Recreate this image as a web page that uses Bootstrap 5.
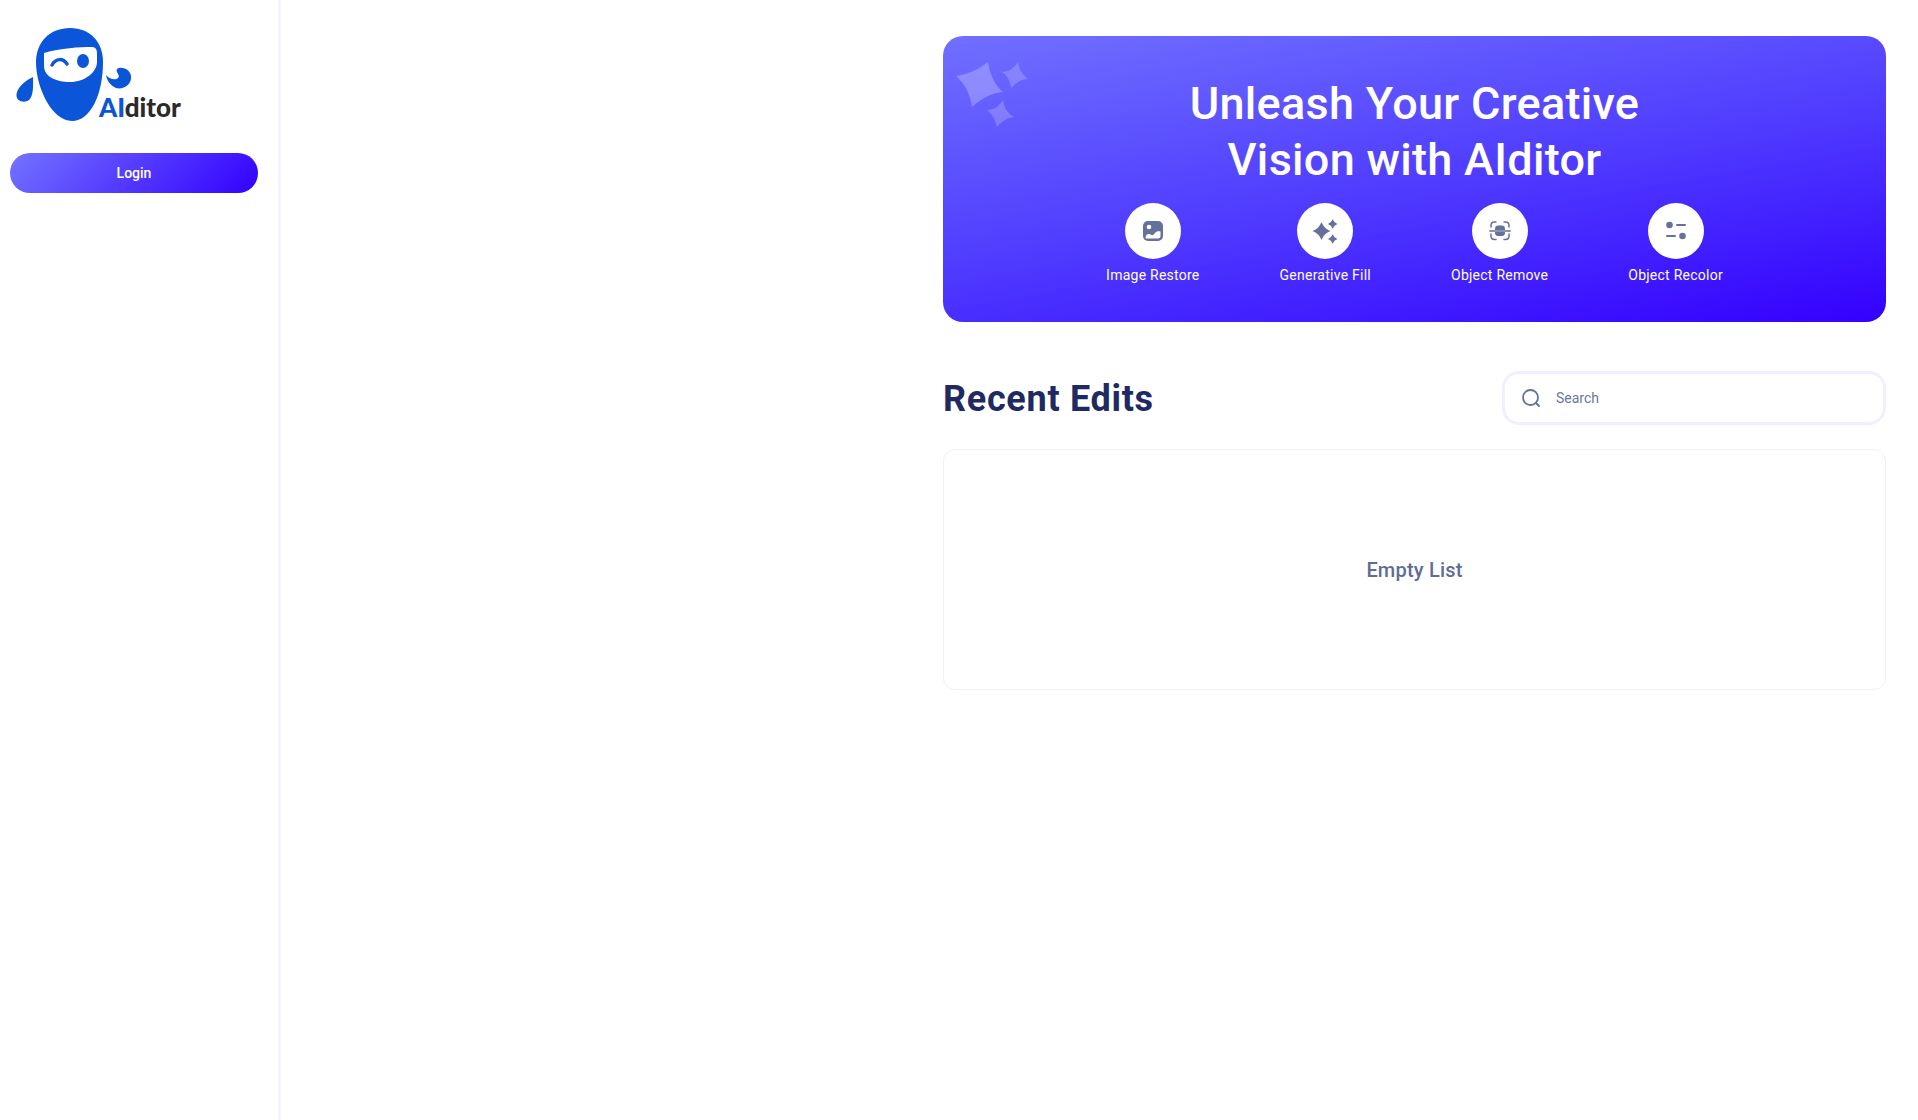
<!DOCTYPE html>
<html lang="en">
<head>
    <meta charset="UTF-8">
    <meta name="viewport" content="width=device-width, initial-scale=1.0">
    <title>AIditor</title>
    <link href="https://cdn.jsdelivr.net/npm/bootstrap@5.3.0/dist/css/bootstrap.min.css" rel="stylesheet">
    <style>
        body { font-family: "Roboto", "Liberation Sans", sans-serif; background: #fff; }
        .app-shell { min-height: 1120px; }
        .side-bar { width: 281px; border-right: 3px solid #f4f3ff; padding: 0 20px 0 10px; flex-shrink: 0; }
        .logo-wrap { height: 153px; }
        .logo-text { font-family: "Lato", sans-serif; font-weight: 900; font-size: 26px; }
        .login-btn { height: 40px; background: linear-gradient(135deg, #7373ff 0%, #3300ff 100%); border: 0; color: #fff; font-size: 14px; font-weight: 500; }
        .login-btn:hover { color: #fff; }
        .main-area { padding: 36px 32px 0 0; }
        .panel-col { width: 943px; }
        .hero-box { height: 286px; border-radius: 20px; padding-top: 40px; background: linear-gradient(170deg, #7070ff 0%, #4d38ff 55%, #3300ff 100%); }
        .hero-sparkle { position: absolute; left: 12px; top: 24px; }
        .hero-title { font-size: 45px; line-height: 56px; font-weight: 500; letter-spacing: .3px; margin-bottom: 0; }
        .hero-actions { gap: 80px; margin-top: 15px; }
        .hero-item { color: #fff; font-size: 14px; font-weight: 400; letter-spacing: .25px; }
        .hero-icon { width: 56px; height: 56px; background: #fff; }
        .hero-label { margin-top: 7px; line-height: 18px; white-space: nowrap; }
        .recent-row { margin-top: 49px; }
        .recent-title { font-size: 36px; font-weight: 700; color: #1f2a63; margin: 0; padding-top: 4px; letter-spacing: .7px; }
        .search-box { width: 384px; height: 54px; border: 3px solid #f1efff; border-radius: 17px; padding-left: 16px; }
        .search-input { border: 0; outline: 0; font-size: 14px; color: #5f6c96; margin-left: 13px; width: 300px; background: transparent; }
        .search-input::placeholder { color: #6b76a0; opacity: 1; }
        .empty-box { height: 241px; margin-top: 24px; border: 1px solid #f0f0f5; border-radius: 12px; color: #5f6c96; font-size: 20px; font-weight: 500; letter-spacing: .2px; }
    </style>
</head>
<body>
<div class="app-shell d-flex">
    <aside class="side-bar">
        <div class="logo-wrap">
            <svg width="200" height="130" viewBox="10 0 200 130">
                <path fill="#0a55d8" d="M70 28C50 28 36 42 36 62C36 88 52 121 72 121C90 121 103 95 103 62C103 42 90 28 70 28Z"/>
                <path fill="#fff" d="M44 53C60 48 80 47 92 47C96 47 97 50 97 54L97 62C97 72 85 82 70 82C55 82 44 76 44 66Z"/>
                <path fill="none" stroke="#0a55d8" stroke-width="3.5" stroke-linecap="round" d="M52 65C56 58 63 58 67 64"/>
                <ellipse fill="#0a55d8" cx="83" cy="61" rx="6" ry="7"/>
                <path fill="#0a55d8" d="M33 77C22 82 16 90 16.500 96C17 102 25 103 29 100C34 95 33 85 33 77Z"/>
                <path fill="#0a55d8" d="M106 75C110 80 116 80 118 78C121 75 115 72 117 69C120 66 130 68 131 76C132 85 123 90 116 88C111 86 107 81 106 75Z"/>
                <text class="logo-text" x="99" y="117"><tspan fill="#0a55d8">AI</tspan><tspan fill="#2a2a2a">ditor</tspan></text>
            </svg>
        </div>
        <button type="button" class="btn login-btn rounded-pill w-100 p-0">Login</button>
    </aside>
    <main class="main-area flex-grow-1 d-flex justify-content-end">
        <div class="panel-col">
            <section class="hero-box position-relative text-center text-white">
                <svg class="hero-sparkle" width="76" height="84" viewBox="0 0 76 84" fill="#fff">
                    <path opacity=".25" d="M1 16C13 14 23 10 33 2C35 14 39 24 48 32C37 33 27 38 17 47C15 35 11 25 1 16Z"/>
                    <path opacity=".2" d="M47 12C54 12 59 8 63 2C64 9 67 14 73 19C66 19 61 23 56 28C55 21 53 16 47 12Z"/>
                    <path opacity=".2" d="M32 50C39 50 44 46 48 40C49 47 52 53 59 57C52 58 47 61 42 67C40 60 38 55 32 50Z"/>
                </svg>
                <h1 class="hero-title">Unleash Your Creative<br>Vision with AIditor</h1>
                <div class="hero-actions d-flex justify-content-center">
                    <div class="hero-item d-flex flex-column align-items-center">
                        <div class="hero-icon rounded-circle d-flex align-items-center justify-content-center">
                            <svg width="22" height="22" viewBox="0 0 22 22">
                                <rect x="1" y="1" width="20" height="20" rx="5" fill="#64719a"/>
                                <circle cx="7" cy="7" r="2.300" fill="#fff"/>
                                <path fill="#fff" d="M3.500 18C3.500 15.500 5 14 7 14C8 14 8.500 14.500 9.500 15C11 15.500 12 14.500 13 13C14 11.500 16 11 18.500 11.500L18.500 16C18.500 17.500 17.500 18.500 16 18.500L5 18.500C4 18.500 3.500 18.500 3.500 18Z"/>
                            </svg>
                        </div>
                        <div class="hero-label">Image Restore</div>
                    </div>
                    <div class="hero-item d-flex flex-column align-items-center">
                        <div class="hero-icon rounded-circle d-flex align-items-center justify-content-center">
                            <svg width="26" height="26" viewBox="0 0 26 26" fill="#64719a">
                                <path d="M9.500 4Q12 10.500 18.500 13Q12 15.500 9.500 22Q7 15.500 .5 13Q7 10.500 9.500 4Z"/>
                                <path d="M20.700 1.300Q22 4.700 25.400 6Q22 7.300 20.700 10.700Q19.400 7.300 16 6Q19.400 4.700 20.700 1.300Z"/>
                                <path d="M20.700 16.300Q22 19.700 25.400 21Q22 22.300 20.700 25.700Q19.400 22.300 16 21Q19.400 19.700 20.700 16.300Z"/>
                            </svg>
                        </div>
                        <div class="hero-label">Generative Fill</div>
                    </div>
                    <div class="hero-item d-flex flex-column align-items-center">
                        <div class="hero-icon rounded-circle d-flex align-items-center justify-content-center">
                            <svg width="22" height="20" viewBox="0 0 22 20" fill="none" stroke="#64719a" stroke-width="1.500" stroke-linecap="round">
                                <path d="M2 6V4.500C2 2.500 3.500 1 5.500 1H7"/>
                                <path d="M15 1H16.500C18.500 1 20 2.500 20 4.500V6"/>
                                <path d="M2 13V15C2 17 3.500 18.500 5.500 18.500H7"/>
                                <path d="M15 18.500H16.500C18.500 18.500 20 17 20 15V13"/>
                                <path d="M0.800 10H21.200"/>
                                <path fill="#64719a" stroke="none" d="M6 9V7.500C6 5.500 7.500 4.500 9 4.500H13C14.500 4.500 16 5.500 16 7.500V9Z"/>
                                <path fill="#64719a" stroke="none" d="M6 11H16V12C16 14 14.500 15 13 15H9C7.500 15 6 14 6 12Z"/>
                            </svg>
                        </div>
                        <div class="hero-label">Object Remove</div>
                    </div>
                    <div class="hero-item d-flex flex-column align-items-center">
                        <div class="hero-icon rounded-circle d-flex align-items-center justify-content-center">
                            <svg width="22" height="20" viewBox="0 0 22 20" fill="#64719a">
                                <circle cx="4.500" cy="4" r="3.300"/>
                                <rect x="11" y="3" width="10" height="2" rx="1"/>
                                <rect x="1" y="14" width="10" height="2" rx="1"/>
                                <circle cx="17.500" cy="15" r="3.300"/>
                            </svg>
                        </div>
                        <div class="hero-label">Object Recolor</div>
                    </div>
                </div>
            </section>
            <div class="recent-row d-flex justify-content-between align-items-center">
                <h2 class="recent-title">Recent Edits</h2>
                <div class="search-box d-flex align-items-center">
                    <svg width="20" height="20" viewBox="0 0 20 20" fill="none" stroke="#64719a" stroke-width="1.800" stroke-linecap="round">
                        <circle cx="9.500" cy="9.500" r="7.500"/>
                        <path d="M15 15L18 18"/>
                    </svg>
                    <input class="search-input" type="text" placeholder="Search">
                </div>
            </div>
            <div class="empty-box d-flex align-items-center justify-content-center">Empty List</div>
        </div>
    </main>
</div>
<script src="https://cdn.jsdelivr.net/npm/bootstrap@5.3.0/dist/js/bootstrap.bundle.min.js"></script>
</body>
</html>
